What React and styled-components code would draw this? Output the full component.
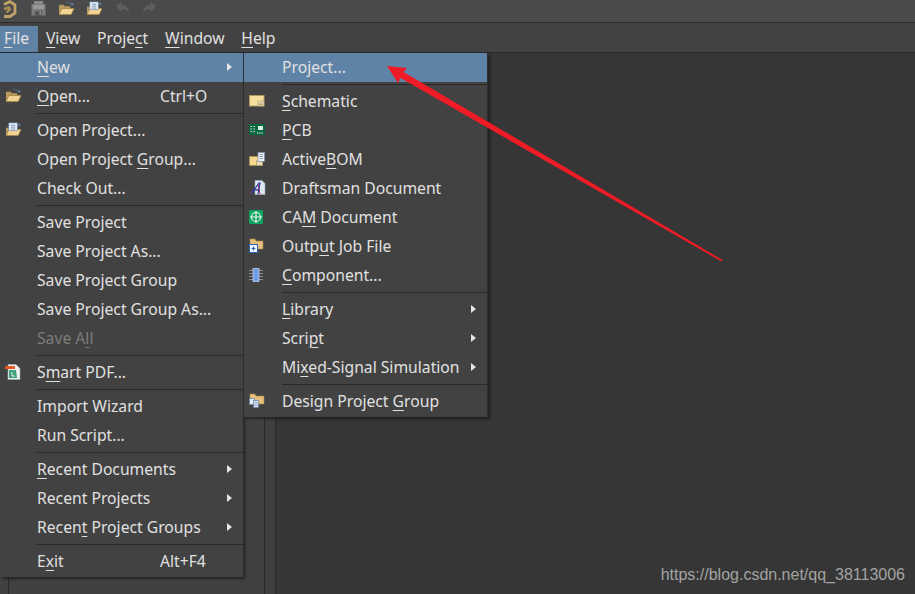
import styled, { createGlobalStyle } from "styled-components";

const GlobalStyle = createGlobalStyle`
  html, body {
    margin: 0;
    padding: 0;
    background: #363636;
    overflow: hidden;
  }
`;

const OpenFolderIcon = () => (
  <svg width="17" height="15" viewBox="0 0 18 16">
    <path d="M1 4h5l1 1.500h6V8H4l-3 6z" fill="#b89a5e" />
    <path d="M1 14.500l3-6.500h13l-3 6.500z" fill="#f1d293" stroke="#a58748" strokeWidth="0.8" />
    <path d="M9 1.500a5 5 0 0 1 5 1.500" stroke="#5b88b5" strokeWidth="1" strokeDasharray="1.500 1" fill="none" />
    <path d="M15 2v3M13.500 3.500h3" stroke="#6b9ac9" strokeWidth="0.8" />
  </svg>
);

const OpenProjectIcon = () => (
  <svg width="17" height="15" viewBox="0 0 18 16">
    <path d="M1 6h3v3l-3 5z" fill="#b89a5e" />
    <path d="M1 14.500l3-6.500h13l-3 6.500z" fill="#f1d293" stroke="#a58748" strokeWidth="0.8" />
    <rect x="4" y="1" width="9" height="8" fill="#eef3fa" stroke="#6f8fb5" strokeWidth="0.7" />
    <path d="M6 3.500h5M6 5.500h5M6 7.500h5" stroke="#5579a3" strokeWidth="0.8" />
    <path d="M15 1.500v3M13.500 3h3" stroke="#6b9ac9" strokeWidth="0.7" />
  </svg>
);

const SaveIcon = () => (
  <svg width="15" height="16" viewBox="0 0 15 16">
    <path d="M3 1h9v3H3z" fill="#8b8b8b" />
    <rect x="0.500" y="4" width="14" height="11.500" fill="#7b7b7b" />
    <rect x="2" y="5" width="11" height="4" fill="#999" />
    <rect x="4" y="11" width="7" height="4.500" fill="#555" />
    <rect x="8.500" y="11.500" width="1.500" height="3" fill="#999" />
  </svg>
);

const LogoIcon = () => (
  <svg width="16" height="18" viewBox="0 0 16 18">
    <path d="M3 4.500L9 1.500l5 3.500v8l-5 3.500H3" fill="none" stroke="#c2a269" strokeWidth="2.800" />
    <path d="M3 9l5-1.500 1 2-3.500 3" fill="none" stroke="#a98b55" strokeWidth="2.400" />
  </svg>
);

const UndoIcon = ({ flip }) => (
  <svg width="15" height="12" viewBox="0 0 15 12" style={flip ? { transform: "scaleX(-1)" } : undefined}>
    <path d="M1 4l5-4v3c5 0 8 3 8 8-2-3-4-4-8-4v3z" fill="#5f5f5f" />
  </svg>
);

const SchematicIcon = () => (
  <svg width="16" height="12" viewBox="0 0 16 12">
    <rect x="0.500" y="0.500" width="14.500" height="10.500" fill="#f7e09f" stroke="#b09a5f" />
    <rect x="9" y="6" width="6" height="5" fill="#efe6c2" stroke="#a89660" strokeWidth="0.6" />
    <path d="M10 8h4M10 9.500h4" stroke="#8d7d50" strokeWidth="0.6" />
  </svg>
);

const PcbIcon = () => (
  <svg width="16" height="12" viewBox="0 0 16 12">
    <rect width="16" height="11" fill="#07653f" />
    <rect x="9" y="2" width="5" height="4" fill="#d8efe3" />
    <path d="M1.500 2.500h2M4.500 2.500h2M1.500 5h2M4.500 5h2M1.500 7.500h2M4.500 7.500h2M8 9h6" stroke="#d8efe3" strokeWidth="1.100" strokeDasharray="1.500 .7" />
  </svg>
);

const BomIcon = () => (
  <svg width="16" height="14" viewBox="0 0 16 14">
    <rect x="0.500" y="4.500" width="13" height="9" fill="#f4d98f" stroke="#a58f58" />
    <rect x="7.500" y="9" width="6" height="4.500" fill="#eadfb8" stroke="#a08b58" strokeWidth="0.6" />
    <rect x="9" y="0.500" width="6.500" height="9" fill="#e8edf5" stroke="#8092ac" strokeWidth="0.7" />
    <path d="M10.500 2.500h3.500M10.500 4.500h3.500M10.500 6.500h3.500" stroke="#6c7f9b" strokeWidth="0.7" />
  </svg>
);

const DraftsmanIcon = () => (
  <svg width="17" height="15" viewBox="0 0 17 15">
    <path d="M6 0.500h7l3 3v11H6z" fill="#dfe6f2" stroke="#9aa8bf" strokeWidth="0.6" />
    <path d="M1 13l5-4 4 1M9 4l2 10" stroke="#d02b35" strokeWidth="1" fill="none" />
    <path d="M2 14l8-11 1 0-2 11M3 10h8" stroke="#2340a8" strokeWidth="1.200" fill="none" />
  </svg>
);

const CamIcon = () => (
  <svg width="14" height="14" viewBox="0 0 14 14">
    <rect width="14" height="14" rx="1" fill="#0ea25f" />
    <circle cx="7" cy="7" r="4.500" fill="none" stroke="#e6f8ef" strokeWidth="1.200" />
    <path d="M7 1v12M1 7h12" stroke="#e6f8ef" strokeWidth="1.200" />
  </svg>
);

const OutputIcon = () => (
  <svg width="16" height="15" viewBox="0 0 16 15">
    <path d="M1 1h5l1 2h7v8H1z" fill="#e6bf7a" stroke="#a58748" strokeWidth="0.6" />
    <rect x="0.500" y="6.500" width="8" height="8" fill="#f4f8ff" stroke="#2a62c0" />
    <path d="M4.500 8.500v4M2.500 10.500h4" stroke="#2a62c0" strokeWidth="1.200" />
  </svg>
);

const ComponentIcon = () => (
  <svg width="14" height="14" viewBox="0 0 14 14">
    <path d="M0 2.500h14M0 5.500h14M0 8.500h14M0 11.500h14" stroke="#9a9a9a" strokeWidth="0.900" />
    <rect x="4" y="0.500" width="6" height="13" fill="#6f9de8" stroke="#c9d9f5" strokeWidth="0.700" />
  </svg>
);

const GroupIcon = () => (
  <svg width="16" height="15" viewBox="0 0 16 15">
    <path d="M1 1h5l1 2h8v8H1z" fill="#e6bf7a" stroke="#a58748" strokeWidth="0.600" />
    <rect x="0.500" y="5.500" width="5" height="6" fill="#e5edf8" stroke="#5d7ea8" strokeWidth="0.700" />
    <rect x="4.500" y="7.500" width="5" height="7" fill="#e5edf8" stroke="#5d7ea8" strokeWidth="0.700" />
    <path d="M5.500 9.500h3M5.500 11h3M5.500 12.500h3" stroke="#5d7ea8" strokeWidth="0.600" />
  </svg>
);

const PdfIcon = () => (
  <svg width="16" height="16" viewBox="0 0 16 16">
    <path d="M3 0.500h8l4 4v11H3z" fill="#eef2f2" stroke="#9fb0b0" strokeWidth="0.600" />
    <path d="M4 6h7l1 8H4z" fill="#3d9f7b" />
    <rect y="2" width="10" height="3" fill="#e2571e" />
    <path d="M7 8v4h3" stroke="#dff3ea" strokeWidth="1" fill="none" />
  </svg>
);

const fileMenu = [
  { label: "New", key: 0, arrow: true, active: true },
  { label: "Open...", key: 0, hint: "Ctrl+O", icon: <OpenFolderIcon /> },
  "sep",
  { label: "Open Project...", icon: <OpenProjectIcon /> },
  { label: "Open Project Group...", key: 13 },
  { label: "Check Out..." },
  "sep",
  { label: "Save Project" },
  { label: "Save Project As..." },
  { label: "Save Project Group" },
  { label: "Save Project Group As..." },
  { label: "Save All", key: 6, disabled: true },
  "sep",
  { label: "Smart PDF...", key: 1, icon: <PdfIcon /> },
  "sep",
  { label: "Import Wizard" },
  { label: "Run Script..." },
  "sep",
  { label: "Recent Documents", key: 0, arrow: true },
  { label: "Recent Projects", arrow: true },
  { label: "Recent Project Groups", key: 5, arrow: true },
  "sep",
  { label: "Exit", key: 1, hint: "Alt+F4" },
];

const newMenu = [
  { label: "Project...", active: true },
  "sep",
  { label: "Schematic", key: 0, icon: <SchematicIcon /> },
  { label: "PCB", key: 0, icon: <PcbIcon /> },
  { label: "ActiveBOM", key: 6, icon: <BomIcon /> },
  { label: "Draftsman Document", icon: <DraftsmanIcon /> },
  { label: "CAM Document", key: 2, icon: <CamIcon /> },
  { label: "Output Job File", key: 4, icon: <OutputIcon /> },
  { label: "Component...", key: 0, icon: <ComponentIcon /> },
  "sep",
  { label: "Library", key: 0, arrow: true },
  { label: "Script", key: 4, arrow: true },
  { label: "Mixed-Signal Simulation", key: 2, arrow: true },
  "sep",
  { label: "Design Project Group", key: 15, icon: <GroupIcon /> },
];

const menuTitles = [
  { label: "File", key: 0, open: true },
  { label: "View", key: 0 },
  { label: "Project", key: 5 },
  { label: "Window", key: 0 },
  { label: "Help", key: 0 },
];

function Accel({ label, index }) {
  if (index === undefined) return label;
  return (
    <>
      {label.slice(0, index)}
      <u>{label[index]}</u>
      {label.slice(index + 1)}
    </>
  );
}

function MenuList({ items, gutter }) {
  return items.map((item, i) =>
    item === "sep" ? (
      <Separator key={i} $gutter={gutter} />
    ) : (
      <Row key={i} $active={item.active} $disabled={item.disabled}>
        <IconSlot $gutter={gutter}>{item.icon}</IconSlot>
        <Label>
          <Accel label={item.label} index={item.key} />
        </Label>
        {item.hint && <Hint>{item.hint}</Hint>}
        {item.arrow && <Caret />}
      </Row>
    )
  );
}

export default function App() {
  return (
    <>
      <GlobalStyle />
      <Page>
        <Toolbar>
          <LogoSlot>
            <LogoIcon />
          </LogoSlot>
          <ToolGroup>
            <SaveIcon />
            <OpenFolderIcon />
            <OpenProjectIcon />
            <UndoIcon />
            <UndoIcon flip />
          </ToolGroup>
        </Toolbar>
        <MenuBar>
          {menuTitles.map((m) => (
            <MenuTitle key={m.label} $open={m.open}>
              <Accel label={m.label} index={m.key} />
            </MenuTitle>
          ))}
        </MenuBar>
        <Workspace>
          <LeftRail />
          <LeftDock />
          <DockStrip />
          <Canvas />
          <FileMenu>
            <MenuList items={fileMenu} gutter={37} />
          </FileMenu>
          <NewMenu>
            <MenuList items={newMenu} gutter={38} />
          </NewMenu>
        </Workspace>
        <ArrowMark viewBox="0 0 915 594">
          <polygon points="387,66 407,68 403.500,72 722.500,260 721.500,261.500 400.500,78 398,83" fill="#ee1c25" />
        </ArrowMark>
        <Watermark>https://blog.csdn.net/qq_38113006</Watermark>
      </Page>
    </>
  );
}

const Page = styled.div`
  position: relative;
  width: 915px;
  height: 594px;
  overflow: hidden;
  display: flex;
  flex-direction: column;
  background: #363636;
  font-family: "Noto Sans", "Open Sans", sans-serif;
  font-size: 15.7px;
  color: #e0e0e0;

  u {
    text-underline-offset: 3px;
    text-decoration-thickness: 1px;
  }
`;

const Toolbar = styled.div`
  height: 22px;
  flex: none;
  display: flex;
  align-items: flex-start;
  background: #4a4a4a;
  border-bottom: 1px solid #2c2c2c;
`;

const LogoSlot = styled.div`
  width: 31px;
  height: 18px;
  flex: none;
  padding-left: 1px;
  box-sizing: border-box;
`;

const ToolGroup = styled.div`
  display: flex;
  align-items: center;
  gap: 11.7px;
  height: 16px;
`;

const MenuBar = styled.div`
  height: 29px;
  flex: none;
  display: flex;
  align-items: flex-end;
  background: #424242;
`;

const MenuTitle = styled.div`
  height: 26px;
  line-height: 25px;
  padding: ${(p) => (p.$open ? "0 8.4px 0 4px" : "0 8.4px")};
  background: ${(p) => (p.$open ? "#5f83a6" : "transparent")};
`;

const Workspace = styled.div`
  position: relative;
  flex: 1;
  display: flex;
  border-top: 1px solid #2c2c2c;
`;

const LeftRail = styled.div`
  width: 8px;
  flex: none;
  background: #414141;
  border-right: 1px solid #2a2a2a;
`;

const LeftDock = styled.div`
  width: 255px;
  flex: none;
  background: #414141;
  border-right: 1px solid #2a2a2a;
`;

const DockStrip = styled.div`
  width: 10px;
  flex: none;
  background: #3f3f3f;
  border-right: 1px solid #2a2a2a;
`;

const Canvas = styled.div`
  flex: 1;
  background: #363636;
`;

const Panel = styled.div`
  position: absolute;
  top: 0;
  background: #424242;
  box-shadow: 2px 2px 3px rgba(0, 0, 0, 0.45);
  padding-bottom: 1px;
`;

const FileMenu = styled(Panel)`
  left: 0;
  width: 243px;
`;

const NewMenu = styled(Panel)`
  left: 243px;
  width: 245px;
  box-sizing: border-box;
  border-left: 1px solid #2e2e2e;
  border-right: 1px solid #2e2e2e;
`;

const Row = styled.div`
  height: 29px;
  box-sizing: border-box;
  padding-bottom: 2px;
  display: flex;
  align-items: center;
  background: ${(p) => (p.$active ? "#5f83a6" : "transparent")};
  color: ${(p) => (p.$disabled ? "#7c7c7c" : "#e0e0e0")};
  white-space: nowrap;
`;

const IconSlot = styled.div`
  width: ${(p) => p.$gutter}px;
  flex: none;
  display: flex;
  justify-content: flex-start;
  padding-left: 5px;
  box-sizing: border-box;
`;

const Label = styled.span`
  flex: 1;
`;

const Hint = styled.span`
  width: 83px;
  flex: none;
`;

const Caret = styled.span`
  width: 0;
  height: 0;
  flex: none;
  margin-right: 11px;
  border-left: 5px solid #e6e6e6;
  border-top: 4.500px solid transparent;
  border-bottom: 4.500px solid transparent;
`;

const Separator = styled.div`
  height: 5px;
  box-sizing: border-box;
  padding-top: 2px;
  margin-left: ${(p) => p.$gutter}px;

  &::before {
    content: "";
    display: block;
    height: 1px;
    background: #2a2a2a;
  }
`;

const ArrowMark = styled.svg`
  position: absolute;
  inset: 0;
  width: 915px;
  height: 594px;
  pointer-events: none;
`;

const Watermark = styled.div`
  position: absolute;
  right: 10px;
  bottom: 10px;
  font-family: "Liberation Sans", Arial, sans-serif;
  font-size: 16px;
  color: #a3a3a3;
`;
